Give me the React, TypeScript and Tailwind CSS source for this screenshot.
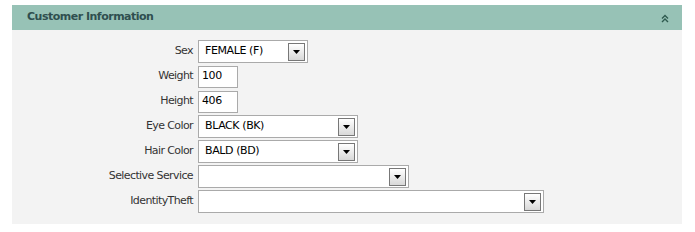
import React from 'react';

interface Field {
  label: string;
  kind: 'select' | 'input';
  value: string;
  width: string;
}

const fields: Field[] = [
  { label: 'Sex', kind: 'select', value: 'FEMALE (F)', width: 'w-[110px]' },
  { label: 'Weight', kind: 'input', value: '100', width: 'w-[40px]' },
  { label: 'Height', kind: 'input', value: '406', width: 'w-[40px]' },
  { label: 'Eye Color', kind: 'select', value: 'BLACK (BK)', width: 'w-[160px]' },
  { label: 'Hair Color', kind: 'select', value: 'BALD (BD)', width: 'w-[160px]' },
  { label: 'Selective Service', kind: 'select', value: '', width: 'w-[211px]' },
  { label: 'IdentityTheft', kind: 'select', value: '', width: 'w-[346px]' },
];

const Arrow = () => (
  <div className="w-[17px] h-[18px] border border-[#777] bg-gradient-to-b from-white to-[#d8d8d8] flex items-center justify-center">
    <svg width="7" height="4" viewBox="0 0 7 4">
      <path d="M0 0h7L3.5 4z" fill="#000" />
    </svg>
  </div>
);

const App: React.FC = () => {
  return (
    <div className="w-[695px] h-[232px] bg-white pt-[5px] pl-[12px] font-['DejaVu_Sans',sans-serif]">
      <div className="w-[670px]">
        <div className="h-[25px] bg-[#97c2b6] flex items-center justify-between pl-[15px] pr-[13px]">
          <span className="text-[11px] font-bold text-[#2f4f4f] tracking-[-0.5px]">Customer Information</span>
          <svg width="8" height="9" viewBox="0 0 8 9" className="mt-[1px]">
            <path d="M1 4.5L4 1.5L7 4.5M1 8L4 5L7 8" fill="none" stroke="#2e5a4f" strokeWidth="1.4" />
          </svg>
        </div>
        <div className="h-[194px] bg-[#f3f3f3] pt-[9px]">
          {fields.map((f, idx) => (
            <div key={idx} className="flex items-center h-[25px]">
              <div className="w-[181px] text-right text-[11px] text-[#333] tracking-[-0.6px]">{f.label}</div>
              <div className="ml-[5px]">
                {f.kind === 'select' ? (
                  <div className={`${f.width} h-[23px] bg-white border border-[#aaa] flex items-center justify-between pl-[6px] pr-[2px]`}>
                    <span className="text-[11px] text-black tracking-[-0.4px]">{f.value}</span>
                    <Arrow />
                  </div>
                ) : (
                  <div className={`${f.width} h-[22px] bg-white border border-[#aaa] flex items-center pl-[3px]`}>
                    <span className="text-[11px] text-black tracking-[-0.4px]">{f.value}</span>
                  </div>
                )}
              </div>
            </div>
          ))}
        </div>
      </div>
    </div>
  );
};

export default App;
